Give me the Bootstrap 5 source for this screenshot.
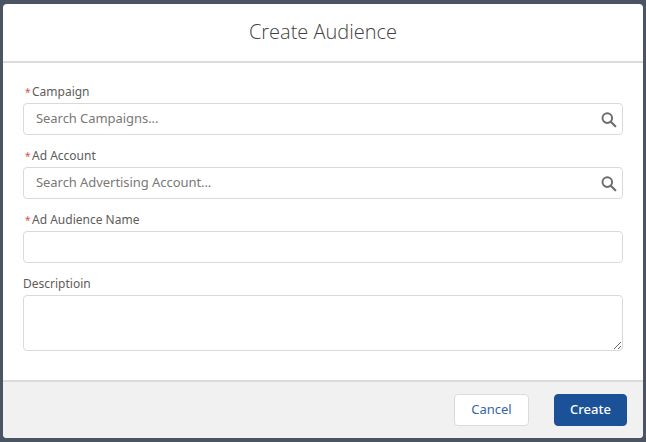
<!DOCTYPE html>
<html lang="en">
<head>
<meta charset="utf-8">
<meta name="viewport" content="width=device-width, initial-scale=1">
<title>Create Audience</title>
<link href="https://cdn.jsdelivr.net/npm/bootstrap@5.3.0/dist/css/bootstrap.min.css" rel="stylesheet">
<style>
body { background: #4b5462; font-family: "Noto Sans", "Open Sans", sans-serif; font-size: 13px; color: #54524f; height: 442px; overflow: hidden; padding: 4px 3px; }
.dialog { height: 434px; border: 0; border-radius: 4px; overflow: hidden; background: #fff; color: #5e5c59; }
.dialog .modal-header { height: 59px; padding: 0 0 2px; border-bottom: 2px solid #dddbda; border-radius: 0; }
.dialog .modal-title { font-family: "Open Sans", sans-serif; font-weight: 300; font-size: 20px; line-height: 25px; color: #43413f; }
.dialog .modal-body { padding: 20px 20px 0; }
.dialog .modal-footer { height: 58px; padding: 0 16px; gap: 25px; background: #f1f1f1; border-top: 2px solid #dddbda; border-radius: 0; }
.field { height: 64px; }
.field .form-label { display: flex; height: 20px; line-height: 18px; margin: 0; font-size: 12px; }
.req { color: #d9534a; width: 9px; padding-left: 2px; font-size: 10px; }
.field .form-control { height: 32px; border: 1px solid #d9d9d9; border-radius: 4px; padding: 0 12px 2px; font-size: 13px; line-height: 28px; color: #54524f; letter-spacing: -.06px; }
.field .form-control::placeholder { color: #7a7876; }
.field textarea.form-control { height: 56px; min-height: 56px; resize: vertical; }
.glass { right: 6px; top: 9px; }
.dialog .btn { height: 32px; padding: 0 0 2px; margin: 0; font-size: 13px; line-height: 28px; border-radius: 4px; }
.btn-cancel { width: 75px; background: #fff; border: 1px solid #dddbda; color: #3565a8; }
.btn-create { width: 73px; background: #1b5297; border: 1px solid #1b5297; color: #fff; font-weight: 500; }
</style>
<script src="https://cdn.jsdelivr.net/npm/bootstrap@5.3.0/dist/js/bootstrap.bundle.min.js"></script>
</head>
<body>
<div class="dialog modal-content d-flex flex-column">
  <div class="modal-header justify-content-center"><h1 class="modal-title">Create Audience</h1></div>
  <form class="modal-body flex-grow-1">
    <div class="field">
      <label class="form-label" for="campaign"><span class="req">*</span><span>Campaign</span></label>
      <div class="position-relative">
        <input class="form-control" id="campaign" placeholder="Search Campaigns...">
        <svg class="glass position-absolute" width="16" height="16" viewBox="0 0 16 16" fill="none" stroke="#706e6b"><circle cx="6.3" cy="6.1" r="4.8" stroke-width="2"/><path d="M9.8 9.7 14.3 14.2" stroke-width="2.2" stroke-linecap="round"/></svg>
      </div>
    </div>
    <div class="field">
      <label class="form-label" for="account"><span class="req">*</span><span>Ad Account</span></label>
      <div class="position-relative">
        <input class="form-control" id="account" placeholder="Search Advertising Account...">
        <svg class="glass position-absolute" width="16" height="16" viewBox="0 0 16 16" fill="none" stroke="#706e6b"><circle cx="6.3" cy="6.1" r="4.8" stroke-width="2"/><path d="M9.8 9.7 14.3 14.2" stroke-width="2.2" stroke-linecap="round"/></svg>
      </div>
    </div>
    <div class="field">
      <label class="form-label" for="name"><span class="req">*</span><span>Ad Audience Name</span></label>
      <input class="form-control" id="name">
    </div>
    <div class="field">
      <label class="form-label" for="description">Descriptioin</label>
      <textarea class="form-control" id="description"></textarea>
    </div>
  </form>
  <div class="modal-footer">
    <button type="button" class="btn btn-cancel">Cancel</button>
    <button type="button" class="btn btn-create">Create</button>
  </div>
</div>
</body>
</html>
